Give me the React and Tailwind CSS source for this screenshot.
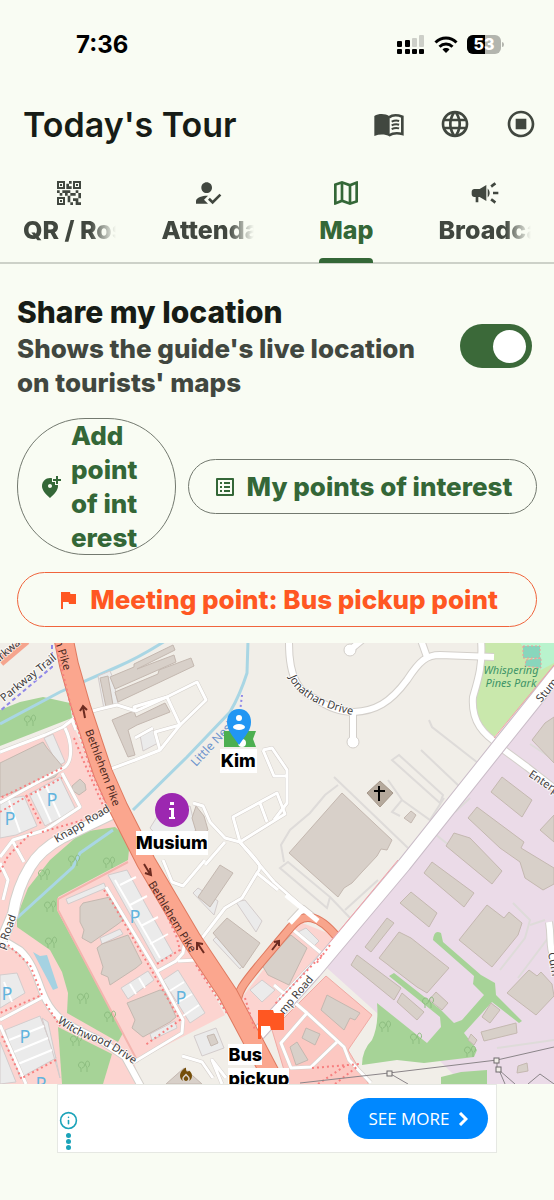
import { useState } from "react";
import {
  MdAddLocationAlt,
  MdCampaign,
  MdFlag,
  MdHowToReg,
  MdLanguage,
  MdListAlt,
  MdLocalFireDepartment,
  MdOutlineMap,
  MdOutlineStopCircle,
  MdQrCode2,
} from "react-icons/md";
import { FiInfo } from "react-icons/fi";

const tabs = [
  { id: "qr", label: "QR / Roster", icon: MdQrCode2 },
  { id: "attendance", label: "Attendance", icon: MdHowToReg },
  { id: "map", label: "Map", icon: MdOutlineMap },
  { id: "broadcast", label: "Broadcast", icon: MdCampaign },
];

// map geometry, in map canvas units
const buildings = [
  "0,763 43,742 47,748 63,767 55,777 0,797",
  "100,678 108,676 113,705 106,707",
  "110,677 134,667 134,664 173,645 175,650 137,669 174,655 176,662 115,689",
  "115,692 158,674 159,670 191,658 194,666 118,702",
  "112,720 126,714 134,711 136,717 165,703 170,712 137,725 128,730 135,755 128,757",
  "72,786 80,779 85,784 86,790 79,795 72,790",
  "80,907 83,903 110,897 123,920 118,924 91,943 82,938 84,930 80,922",
  "97,948 102,944 128,935 142,963 136,968 110,985 108,977 101,974 103,967",
  "127,1003 160,990 165,992 176,1017 170,1022 143,1037 132,1028 135,1020",
  "220,865 233,873 210,907 198,897",
  "227,918 260,943 243,968 213,933",
  "291,935 307,948 289,985 268,975 262,965",
  "342,793 392,840 387,850 381,849 377,856 362,872 352,883 344,888 338,897 289,853",
  "411,811 416,815 411,823 404,818",
  "554,717 545,723 532,740 554,763",
  "502,777 532,800 522,817 491,792",
  "477,807 524,842 521,848 554,868 554,884 543,890 525,878 520,862 500,848 468,818",
  "554,815 540,830 554,842",
  "454,833 470,838 502,871 492,884 446,846",
  "432,862 474,893 464,907 424,873",
  "411,892 437,913 429,927 400,903",
  "387,918 394,923 371,952 365,947",
  "399,932 411,938 449,968 427,993 417,987 392,968 387,964 379,958",
  "487,905 504,918 509,912 522,923 518,935 492,967 459,940",
  "357,955 401,988 394,1000 351,965",
  "402,993 424,1012 417,1020 397,1002",
  "436,992 448,1003 442,1010 429,1000",
  "529,970 537,976 541,972 552,984 554,996 536,1015 507,993",
  "491,1003 500,1010 490,1023 482,1017",
  "481,1032 516,1023 517,1033 484,1041",
  "471,1034 477,1040 474,1045 468,1040",
  "518,1066 527,1063 528,1071 517,1073",
  "327,995 336,1000 360,1013 355,1020 350,1018 344,1030 321,1010",
  "306,1028 320,1034 315,1045 302,1038",
  "297,1042 308,1060 296,1065 290,1047",
  "207,1036 214,1034 218,1043 211,1046",
  "166,1084 184,1068 202,1084",
  "196,806 204,816 208,830 198,838 192,818",
];

const parkings = [
  "44,738 53,734 65,762 58,766",
  "29,794 60,777 76,810 45,826",
  "0,800 24,796 37,826 16,835 0,838",
  "66,899 104,883 106,888 68,904",
  "108,875 127,870 146,905 173,953 157,963",
  "100,938 120,929 123,934 102,944",
  "121,988 148,971 154,980 128,999",
  "163,980 178,970 205,1013 190,1023",
  "150,1034 175,1021 177,1028 152,1040",
  "0,975 17,973 25,993 0,1008",
  "5,1030 40,1016 56,1058 20,1078",
  "0,1042 16,1082 0,1084",
  "60,1078 52,1050 42,1018 48,1022",
  "98,676 110,671 113,678 118,704 104,709",
  "140,735 153,728 158,743 143,751",
  "193,893 198,888 218,901 214,915",
  "213,940 217,936 243,964 240,969",
  "236,902 245,900 262,921 256,932",
  "194,1036 216,1028 224,1048 202,1056",
  "298,932 306,928 319,941 312,948",
  "250,990 262,980 275,990 262,1002",
  "160,812 190,806 196,830 170,850 150,828",
];

const roads = [
  "M0 752 L45 735 L63 727 L72 720 L78 715 L100 709 L117 705 L136 711 L167 697 L197 682 L206 700 L180 725 L160 750 L135 760 L108 770",
  "M136 711 L134 707 L167 697 L180 725 L155 732 L160 750 M135 738 L153 728",
  "M65 728 C72 742 73 760 65 767 L0 803",
  "M72 720 L76 730",
  "M62 773 L80 807 L45 830 L13 840 L0 857 M12 840 L24 862",
  "M193 803 L203 806 L210 822 L225 838 L240 842 L274 882 L310 914",
  "M233 817 L277 793 L285 814 L240 842 Z M260 803 L267 822",
  "M263 750 L272 748 L287 770 L287 803 L274 820",
  "M263 750 L274 776 L286 776",
  "M240 842 C258 862 264 866 257 873 L242 898 L225 908 L202 938",
  "M257 873 L278 890",
  "M163 860 L172 882 L183 886 L205 860",
  "M225 842 L205 865",
  "M106 887 L156 970 L183 1020 L182 1033 L134 1062",
  "M156 972 L176 961 L183 953 L185 940",
  "M178 961 L197 960",
  "M0 1020 L43 997",
  "M0 1025 L26 1084",
  "M0 863 L8 880 L3 900",
  "M291 928 L321 953 M321 955 L278 1000",
  "M274 985 L307 1013 L344 1047 L349 1060 L371 1083",
  "M307 1013 L281 1043 L291 1068 L311 1067 L337 1042",
  "M182 1056 L202 1062 L213 1078 M222 1084 L212 1060 L226 1078",
];

const bigRoads = [
  "M289 643 C289 680 300 692 314 698 C330 708 340 712 354 712 C375 711 390 703 407 680 C420 660 427 655 440 655 L494 657",
  "M353 712 L353 738",
  "M350 650 L362 640",
  "M427 657 L421 640",
  "M481 640 C483 665 478 680 473 697 C471 722 484 735 500 745",
  "M504 750 L527 767 L554 788",
  "M0 938 L20 950 C36 965 38 985 46 1000 C56 1020 70 1026 100 1040 L125 1057 L143 1090",
  "M549 922 C552 940 548 945 556 965",
  "M290 923 L303 909 L318 921",
];

// pale service lanes, drawn without a casing
const lanes = [
  "M334 777 L408 848 M338 785 L325 795 L310 813 L290 830 L281 845 L284 862",
  "M392 760 L399 755 L443 795 L440 803 Z M421 750 L460 787 M429 720 L432 727 L478 763",
  "M388 780 L402 800 L392 812 L400 816 M402 800 L430 820 L444 798",
  "M280 868 L288 862 L330 897 L327 908 Z M330 897 L352 920",
  "M480 870 L430 830 M378 880 L345 910",
  "M513 903 L530 920 L525 938 L500 970 M530 925 L545 920 M554 930 L518 978",
  "M497 1048 L554 1040",
  "M530 744 L554 760 M470 798 L455 812",
];

const parkingSigns = [
  [52, 806],
  [10, 825],
  [135, 923],
  [181, 1004],
  [7, 1000],
  [25, 1043],
  [41, 1090],
];

const trees = [
  [30, 722],
  [44, 876],
  [50, 908],
  [51, 944],
  [83, 1000],
  [110, 1018],
  [76, 1042],
  [84, 1068],
  [74, 862],
  [109, 864],
  [385, 1028],
  [428, 1004],
  [416, 1040],
  [470, 1053],
];

const trunkRoad =
  "M63 636 L69 665 L81 707 L103 773 L118 807 L146 862 L192 940 L228 994 L254 1043 L284 1100";
const linkRoad = "M237 1010 C235 990 245 982 280 940 L291 927 C303 912 318 914 337 937";
const stumpRoad = "M566 662 L501 743 L404 865 L314 972 L258 1034";

const BookIcon = () => (
  <svg width="32" height="32" viewBox="0 0 24 24" aria-hidden="true">
    <path
      fill="none"
      stroke="currentColor"
      strokeWidth="2"
      d="M12 7 C14 5.500 18 5 22 6.500 V19.500 C18 18.500 14.500 19 12 20.500"
    />
    <path
      fill="currentColor"
      d="M12.500 6.300 C9 4 4.500 4 1 6 V21 C5 19.500 9 19.500 12.500 21.300 Z"
    />
    <g fill="none" stroke="currentColor" strokeWidth="1.500">
      <path d="M14 10.200 C15.700 9.400 17.800 9.200 19.600 9.700" />
      <path d="M14 13 C15.700 12.200 17.800 12 19.600 12.500" />
      <path d="M14 15.800 C15.700 15 17.800 14.800 19.600 15.300" />
    </g>
  </svg>
);

const StatusBar = () => (
  <div className="flex h-[90px] items-center justify-between pr-[50px] pl-[76px] text-black">
    <span className="text-[24px] font-bold">7:36</span>
    <div className="flex items-center gap-[9px]">
      <svg width="28" height="20" viewBox="0 0 28 20" aria-hidden="true">
        <g fill="#000">
          <rect x="0" y="6" width="5" height="6" rx="1" />
          <rect x="8" y="5" width="5" height="7" rx="1" />
          <rect x="0" y="14" width="5" height="5" rx="1" />
          <rect x="8" y="14" width="5" height="5" rx="1" />
          <rect x="15" y="14" width="5" height="5" rx="1" />
          <rect x="22" y="14" width="5" height="5" rx="1" />
        </g>
        <rect x="15" y="3" width="5" height="9" rx="1" fill="#cdcfc8" />
        <rect x="22" y="0" width="5" height="12" rx="1" fill="#cdcfc8" />
      </svg>
      <svg width="24" height="20" viewBox="0 0 24 20" aria-hidden="true">
        <g fill="none" stroke="#000" strokeWidth="3">
          <path d="M1.500 7.500 C7.500 1.500 16.500 1.500 22.500 7.500" />
          <path d="M5.500 11.700 C9.300 8 14.700 8 18.500 11.700" />
        </g>
        <path d="M8.500 14.500 C10.400 12.600 13.600 12.600 15.500 14.500 L12 18 Z" fill="#000" />
      </svg>
      <svg width="37" height="20" viewBox="0 0 37 20" role="img" aria-label="Battery 53%">
        <rect x="0" y="0" width="34" height="19" rx="6" fill="#b3b5ae" />
        <path d="M6 0 H18 V19 H6 A6 6 0 0 1 0 13 V6 A6 6 0 0 1 6 0 Z" fill="#000" />
        <path d="M35 7 Q37 7 37 9.500 Q37 12 35 12 Z" fill="#b3b5ae" />
        <text x="17" y="15" textAnchor="middle" fill="#fff" className="text-[16px] font-extrabold">
          53
        </text>
      </svg>
    </div>
  </div>
);

const MapCanvas = () => (
  <svg
    viewBox="0 643 554 441"
    className="block w-full bg-[#f1eee8] font-['Noto_Sans',sans-serif] font-normal"
    role="img"
    aria-label="Tour map"
  >
    <defs>
      <path id="pike" d="M85 731 L119 822" />
      <path id="pike2" d="M148 884 L198 966" />
      <path id="jonathan" d="M289 677 Q300 705 362 717" />
      <path id="witchwood" d="M57 1022 Q76 1036 96 1042 Q112 1048 144 1072" />
    </defs>

    {/* land use */}
    <path d="M0 754 L72 722 L105 800 L146 870 L225 1015 L134 1062 L142 1090 H0 Z" fill="#fcd4d0" />
    <path d="M240 1000 L300 922 L340 938 L290 1004 L262 1040 Z" fill="#fcd4d0" />
    <path d="M326 976 L372 1015 L348 1050 L372 1090 H290 L272 1030 Z" fill="#fcc8c2" stroke="#efaaa4" />
    <path d="M554 686 L410 862 L327 968 L377 1013 L439 1060 L454 1075 L487 1070 V1090 H554 Z" fill="#ebdbe8" />
    <path d="M482 643 H554 V667 L494 737 L476 718 L473 700 L480 674 Z" fill="#c9e8ac" />
    <path d="M520 643 H554 V663 L541 670 Z" fill="#b9f3cd" />
    <path d="M523 646 H540 V658 H523 Z M526 660 L541 658 V668 L525 666 Z" fill="#88d6bc" stroke="#f19a9a" strokeDasharray="2 2" />
    <g fill="#a6d397">
      <path d="M0 710 L20 702 L43 697 L70 703 L72 718 L0 746 Z" />
      <path d="M115 827 L130 840 L128 860 L58 897 L57 910 L123 1033 L118 1042 L67 1013 L68 993 L62 972 L50 950 L17 927 L17 916 L28 888 L50 860 L82 832 Z" />
      <path d="M58 1027 L112 1054 L103 1084 H62 Z" />
      <path d="M377 1003 L427 1043 L441 1027 L440 1017 L389 976 L394 973 L441 1010 L454 1023 L462 1020 L484 995 L473 984 L474 976 L433 940 Q434 929 441 933 L443 942 L481 975 L495 983 L496 995 L522 1021 L519 1023 L492 1002 L464 1033 L477 1050 L474 1057 L424 1063 L397 1060 L362 1065 Q362 1050 372 1040 Q379 1025 377 1003 Z" />
      <path d="M441 1077 L461 1072 L487 1070 V1084 H441 Z" />
    </g>
    <path d="M128 862 L58 899 L58 910 L138 1062" fill="none" stroke="#f4b4ae" strokeWidth="2" />

    {/* water */}
    <path d="M33 952 L40 956 L47 955 L58 988 L53 990 Z" fill="#a5d2e2" />
    <g fill="none" stroke="#a9d6e4" strokeWidth="3">
      <path d="M165 641 Q140 657 117 667 L60 692 L0 724" />
      <path d="M248 641 L247 673 Q240 695 230 712 L187 757 L133 810" />
      <path d="M113 830 L80 853 L73 867 L17 918" />
    </g>

    {/* lanes, parkings and buildings */}
    {lanes.map((d) => (
      <path key={d} d={d} fill="none" stroke="#dedbd9" strokeWidth="2" />
    ))}
    {parkings.map((points) => (
      <polygon key={points} points={points} fill="#ebebeb" stroke="#d3cccc" />
    ))}
    <path
      d="M37 791 L51 822 M46 786 L60 817 M8 798 L20 832 M115 880 L160 958 M120 885 L136 877 M130 905 L147 896 M141 926 L158 917 M150 944 L168 934 M130 984 L136 994 M139 978 L145 988 M168 992 L184 982 M175 1004 L192 994 M183 1016 L199 1005 M9 1040 L44 1026 M14 1052 L48 1038 M18 1064 L52 1050 M4 982 L12 1002"
      fill="none"
      stroke="#fff"
      strokeWidth="2"
    />
    {buildings.map((points) => (
      <polygon key={points} points={points} fill="#d8d0c9" stroke="#c4b8b0" />
    ))}
    <polygon points="380,781 393,793 380,807 367,793" fill="#b5a99c" stroke="#a5978a" />
    <path d="M379 786 V801 M374 791 H385" stroke="#000" strokeWidth="2" />

    {/* roads */}
    <g fill="none" strokeLinejoin="round">
      {roads.map((d) => (
        <path key={d} d={d} stroke="#d5d0cc" strokeWidth="4" />
      ))}
      {bigRoads.map((d) => (
        <path key={d} d={d} stroke="#d3cfca" strokeWidth="8" />
      ))}
      <circle cx="353" cy="742" r="6" fill="#fff" stroke="#d3cfca" />
      <circle cx="350" cy="650" r="6" fill="#fff" stroke="#d3cfca" />
      {roads.map((d) => (
        <path key={d} d={d} stroke="#fff" strokeWidth="3" />
      ))}
      {bigRoads.map((d) => (
        <path key={d} d={d} stroke="#fff" strokeWidth="6" />
      ))}
      <path d="M116 812 L62 838 Q40 850 30 867 Q17 888 13 914 L2 940" stroke="#d3cfca" strokeWidth="12" />
      <path d="M116 812 L62 838 Q40 850 30 867 Q17 888 13 914 L2 940" stroke="#fff" strokeWidth="10" />
      <path d="M0 662 L26 640" stroke="#f5a48e" strokeWidth="10" />
      <path d={linkRoad} stroke="#df7a60" strokeWidth="9" />
      <path d={linkRoad} stroke="#f8a58c" strokeWidth="7" />
      <path d="M290 923 L303 909 M286 895 L318 921" stroke="#fff" strokeWidth="5" />
      <path d={stumpRoad} stroke="#c9bcc7" strokeWidth="15" />
      <path d={stumpRoad} stroke="#fff" strokeWidth="13" />
      <path d={trunkRoad} stroke="#df7a60" strokeWidth="20" />
      <path d={trunkRoad} stroke="#fba68e" strokeWidth="18" />
    </g>

    {/* footpaths */}
    <g fill="none" stroke="#f77f7f" strokeWidth="2" strokeDasharray="2 3">
      <path d="M56 645 L71 707 L92 773 L108 808" />
      <path d="M74 738 L84 762 L105 810 M0 812 L26 797 L62 778 M62 768 L0 798" />
      <path d="M26 795 L42 826 M42 832 L90 818 M0 872 L8 856 L32 832" />
      <path d="M104 890 L112 902 L148 964 L180 1020 L144 1046" />
      <path d="M155 890 L176 935 L180 950 L155 965 M196 965 L228 1015" />
      <path d="M8 945 L30 965 L42 995 L0 1013 M46 1004 L60 1026 M56 1060 L22 1078 M2 1036 L22 1080" />
      <path d="M322 955 L274 1005 M245 998 L255 1030 M330 945 L316 964" />
      <path d="M312 1068 L360 1064 M318 1084 L345 1066 M335 1084 L358 1066" />
    </g>
    <path d="M554 665 L494 738 M398 860 L330 942" stroke="#f5a0a8" fill="none" />
    <path d="M52 645 L52 667 L0 711" fill="none" stroke="#8f87e8" strokeWidth="2" strokeDasharray="4 3" />
    <path d="M242 695 L240 712" fill="none" stroke="#8f87e8" strokeWidth="2" strokeDasharray="2 3" />

    {/* one-way arrows */}
    <g fill="none" stroke="#6d2b20" strokeWidth="2">
      <path d="M85 718 L83 707 M80 711 L83 706 L87 710" />
      <path d="M144 864 L150 874 M145 873 L151 875 L150 868" />
      <path d="M204 953 L198 944 M197 950 L197 943 L203 944" />
      <path d="M272 950 L279 941 M274 942 L279 941 L279 946" />
    </g>

    {/* power line */}
    <g fill="none" stroke="#8b8589">
      <path d="M300 1083 L389 1073 L497 1060 L554 1047 M389 1073 L408 1084 M499 1070 L505 1084 M499 1070 L515 1084 M497 1060 V1070 M528 1084 L540 1074 L554 1084" />
      <g fill="#f1eee8" stroke="#6f6a6d">
        <rect x="387" y="1071" width="5" height="5" />
        <rect x="494" y="1058" width="5" height="5" />
        <rect x="496" y="1067" width="5" height="5" />
      </g>
    </g>

    {/* trees */}
    {trees.map(([x, y]) => (
      <path
        key={`${x}-${y}`}
        d={`M${x - 3} ${y + 4} v-4 a3 3 0 1 1 1 0 M${x + 3} ${y + 4} v-5 a2 3 0 1 1 1 0`}
        fill="none"
        stroke="#8dbd80"
      />
    ))}

    {/* labels */}
    <g fill="#63b4de" textAnchor="middle" className="text-[18px]">
      {parkingSigns.map(([x, y]) => (
        <text key={`${x}-${y}`} x={x} y={y}>
          P
        </text>
      ))}
    </g>
    <g
      fill="#3d3b3b"
      stroke="#fff"
      strokeWidth="2"
      strokeOpacity="0.7"
      paintOrder="stroke"
      className="text-[11px]"
    >
      <text transform="translate(4 702) rotate(-39)">Parkway Trail</text>
      <text transform="translate(-3 664) rotate(-40)">arkwa</text>
      <text transform="translate(57 843) rotate(-31)">Knapp Road</text>
      <text transform="translate(4 950) rotate(-70)">p Road</text>
      <text transform="translate(541 703) rotate(-50)">Stump</text>
      <text transform="translate(528 776) rotate(34)">Enterp</text>
      <text transform="translate(284 1015) rotate(-50)">mp Road</text>
      <text transform="translate(548 953) rotate(80)">Cum</text>
      <text>
        <textPath href="#jonathan">Jonathan Drive</textPath>
      </text>
      <text>
        <textPath href="#witchwood">Witchwood Drive</textPath>
      </text>
    </g>
    <g fill="#4a2620" className="text-[11px]">
      <text transform="translate(55 641) rotate(73)">n Pike</text>
      <text>
        <textPath href="#pike">Bethlehem Pike</textPath>
      </text>
      <text>
        <textPath href="#pike2">Bethlehem Pike</textPath>
      </text>
    </g>
    <text transform="translate(196 767) rotate(-47)" fill="#6a92cc" className="text-[12px]">
      Little Nesh
    </text>
    <g fill="#3d9467" textAnchor="middle" className="text-[11px] italic">
      <text x="511" y="674">
        Whispering
      </text>
      <text x="511" y="687">
        Pines Park
      </text>
    </g>
    <MdLocalFireDepartment x="177" y="1066" width="17" height="17" color="#744d08" />
  </svg>
);

const TourMap = () => (
  <section className="relative overflow-hidden text-[18px] leading-6 font-extrabold text-black" aria-label="Map">
    <MapCanvas />
    <div className="absolute top-[15%] left-[43%] flex -translate-x-1/2 flex-col items-center">
      <svg width="40" height="40" viewBox="0 0 40 40" aria-hidden="true">
        <path d="M6 22 H38 L35 30 L38 38 H6 Z" fill="#4caf50" />
        <circle cx="24" cy="34" r="4" fill="#fff" />
        <path d="M21 0 C13 0 9 6 9 13 C9 21 14 26 21 36 C28 26 33 21 33 13 C33 6 29 0 21 0 Z" fill="#2196f3" />
        <circle cx="21" cy="9" r="3" fill="#fff" />
        <ellipse cx="21" cy="18" rx="6" ry="3" fill="#fff" />
      </svg>
      <span className="bg-white px-px">Kim</span>
    </div>
    <div className="absolute top-[34%] left-[31%] flex -translate-x-1/2 flex-col items-center gap-1">
      <svg width="34" height="34" viewBox="0 0 34 34" aria-hidden="true">
        <circle cx="17" cy="17" r="17" fill="#9c27b0" />
        <path d="M15 9 H19 V12 H15 Z M14 15 H19 V24 H20 V26 H14 V24 H16 V17 H14 Z" fill="#fff" />
      </svg>
      <span className="bg-white">Musium</span>
    </div>
    <div className="absolute top-[83%] left-[49%] flex w-[86px] -translate-x-1/2 flex-col items-center">
      <svg width="28" height="34" viewBox="0 0 28 34" aria-hidden="true">
        <path d="M1 1 H16 L17 4 H27 V21 H14 L13 17 H4 V30 H1 Z" fill="#ff5722" />
      </svg>
      <span className="w-full">
        <span className="bg-white">
          Bus
          <br />
          pickup
        </span>
      </span>
    </div>
  </section>
);

const AdBanner = () => (
  <aside className="mx-[57px] flex h-[69px] items-center justify-between border border-[#e6e8e3] bg-white pr-2" aria-label="Advertisement">
    <div className="flex flex-col items-center gap-[3px] self-end pb-[2px] pl-px text-[#1ba3b9]">
      <button type="button" aria-label="About this ad">
        <FiInfo className="block size-[19px]" />
      </button>
      <button type="button" aria-label="Ad options" className="flex flex-col gap-px">
        <span className="size-[5px] rounded-full bg-current" />
        <span className="size-[5px] rounded-full bg-current" />
        <span className="size-[5px] rounded-full bg-current" />
      </button>
    </div>
    <a
      href="#more"
      className="flex h-[41px] w-[140px] items-center justify-center gap-2 rounded-full bg-[#0088ff] font-['Open_Sans'] text-[17px] text-white"
    >
      SEE MORE
      <svg width="10" height="14" viewBox="0 0 10 14" aria-hidden="true">
        <path d="M2 1 L8 7 L2 13" fill="none" stroke="#fff" strokeWidth="3" />
      </svg>
    </a>
  </aside>
);

const App = () => {
  const [activeTab, setActiveTab] = useState("map");
  const [sharing, setSharing] = useState(true);

  return (
    <div className="min-h-screen bg-[#f9fcf3] font-[Inter,sans-serif] text-[#171c16]">
      <StatusBar />

      {/* Header */}
      <header className="flex h-[68px] items-center justify-between pl-[23px]">
        <h1 className="text-[34px] font-semibold whitespace-nowrap">Today's Tour</h1>
        <div className="flex text-[32px] text-[#41473f]">
          <button type="button" aria-label="Guide book" className="flex w-[66px] justify-center">
            <BookIcon />
          </button>
          <button type="button" aria-label="Language" className="flex w-[66px] justify-center">
            <MdLanguage />
          </button>
          <button type="button" aria-label="End tour" className="flex w-[66px] justify-center">
            <MdOutlineStopCircle />
          </button>
        </div>
      </header>

      {/* Tabs */}
      <nav className="grid h-[106px] grid-cols-4 border-b-2 border-[#cdd1c8]" role="tablist">
        {tabs.map(({ id, label, icon: Icon }) => {
          const active = id === activeTab;
          return (
            <button
              key={id}
              type="button"
              role="tab"
              aria-selected={active}
              onClick={() => setActiveTab(id)}
              className={`flex min-w-0 flex-col items-center px-[23px] pt-[19px] ${
                active ? "text-[#346737]" : "text-[#41473f]"
              }`}
            >
              <Icon className="size-8 shrink-0" />
              <span
                className={`mt-1 max-w-full overflow-hidden text-[25px] leading-[34px] font-extrabold whitespace-nowrap ${
                  active ? "" : "w-full text-left [mask-image:linear-gradient(to_right,black_72%,transparent)]"
                }`}
              >
                {label}
              </span>
              {active && <span className="mt-auto -mb-px h-[5px] w-[54px] rounded-t-[4px] bg-[#346737]" />}
            </button>
          );
        })}
      </nav>

      <main>
        {/* Location sharing */}
        <label className="flex items-center justify-between pt-7 pr-[22px] pl-[17px]">
          <span className="flex flex-col">
            <span className="text-[30px] leading-10 font-extrabold">Share my location</span>
            <span className="max-w-[420px] text-[26px] leading-[34px] font-extrabold text-[#41473f]">
              Shows the guide's live location on tourists' maps
            </span>
          </span>
          <input
            type="checkbox"
            role="switch"
            checked={sharing}
            onChange={() => setSharing((prev) => !prev)}
            className="flex h-11 w-[72px] shrink-0 appearance-none items-center rounded-full bg-[#9aa097] px-[6px] before:size-[33px] before:rounded-full before:bg-white checked:justify-end checked:bg-[#3b6939]"
          />
        </label>

        {/* Points of interest */}
        <div className="flex flex-wrap items-center gap-x-3 gap-y-[17px] px-[17px] pt-[18px] pb-4 text-[26px] leading-[34px] font-extrabold text-[#346737]">
          <button
            type="button"
            className="flex h-[137px] w-[159px] items-center gap-[9px] rounded-[68px] border border-[#73796f] pl-[20px] text-left"
          >
            <MdAddLocationAlt className="size-6 shrink-0" />
            <span className="whitespace-nowrap">
              Add
              <br />
              point
              <br />
              of int
              <br />
              erest
            </span>
          </button>
          <button
            type="button"
            className="flex h-[55px] min-w-0 flex-1 items-center justify-center gap-[10px] rounded-full border border-[#73796f] whitespace-nowrap"
          >
            <MdListAlt className="size-6 shrink-0" />
            My points of interest
          </button>
          <button
            type="button"
            className="flex h-[55px] w-full items-center justify-center gap-[10px] rounded-full border border-[#f0643c] whitespace-nowrap text-[#ff5722]"
          >
            <MdFlag className="size-6 shrink-0" />
            Meeting point: Bus pickup point
          </button>
        </div>

        <TourMap />
        <AdBanner />
      </main>
    </div>
  );
};
export default App;
